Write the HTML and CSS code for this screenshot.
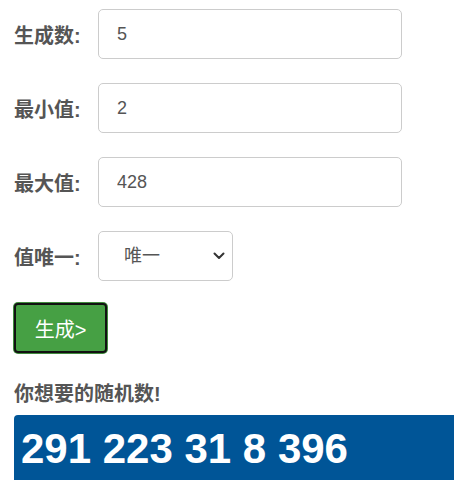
FILE: index.html
```html
<!DOCTYPE html>
<html lang="zh-CN">
  <head>
    <meta charset="UTF-8" />
    <meta name="viewport" content="width=device-width, initial-scale=1.0" />
    <title>随机数生成器</title>
    <link rel="stylesheet" href="styles.css">
  </head>
  <body>
    <form class="gen-form">
      <div class="row">
        <label for="count">生成数:</label>
        <input class="field" id="count" type="text" value="5" />
      </div>
      <div class="row">
        <label for="min">最小值:</label>
        <input class="field" id="min" type="text" value="2" />
      </div>
      <div class="row">
        <label for="max">最大值:</label>
        <input class="field" id="max" type="text" value="428" />
      </div>
      <div class="row">
        <label for="uniq">值唯一:</label>
        <span class="pick-wrap">
          <select class="field pick" id="uniq">
            <option>唯一</option>
            <option>不唯一</option>
          </select>
          <svg class="arrow" width="12" height="8" viewBox="0 0 12 8">
            <path d="M1.5 1.5 L6 6 L10.5 1.5" fill="none" stroke="#333" stroke-width="2" stroke-linecap="round" stroke-linejoin="round" />
          </svg>
        </span>
      </div>
      <button type="button" class="btn-go">生成&gt;</button>
    </form>
    <h4 class="result-title">你想要的随机数!</h4>
    <div class="result">291 223 31 8 396</div>
  </body>
</html>
```
FILE: styles.css
```css
* {
  padding: 0;
  margin: 0;
  box-sizing: border-box;
}
body {
  padding: 9px 0 0 14px;
  font-family: "Liberation Sans", "Noto Sans CJK SC", sans-serif;
  color: #555;
  background: #fff;
  overflow: hidden;
}
.gen-form {
  display: flex;
  flex-direction: column;
  gap: 24px;
}
.row {
  display: flex;
  align-items: center;
  gap: 12px;
}
.row label {
  width: 72px;
  font-size: 20px;
  font-weight: bold;
  color: #555;
  white-space: nowrap;
}
.field {
  width: 304px;
  height: 50px;
  padding: 0 18px;
  font-family: inherit;
  font-size: 18px;
  color: #555;
  border: 1px solid #ccc;
  border-radius: 5px;
  background: #fff;
  outline: none;
}
.pick-wrap {
  position: relative;
  display: flex;
}
.pick {
  width: 135px;
  padding-left: 25px;
  appearance: none;
  -webkit-appearance: none;
}
.arrow {
  position: absolute;
  right: 8px;
  top: 21px;
  pointer-events: none;
}
.btn-go {
  align-self: flex-start;
  width: 93px;
  height: 50px;
  margin-top: -2px;
  font-family: inherit;
  font-size: 20px;
  color: #fff;
  background: #46a044;
  border: 2px solid #111;
  border-radius: 4px;
  box-shadow: 0 0 0 1px #3f8a3c;
}
.result-title {
  margin-top: 25px;
  font-size: 20px;
  font-weight: bold;
  color: #555;
}
.result {
  margin-top: 8px;
  height: 70px;
  padding: 10px 0 0 7px;
  font-size: 42px;
  font-weight: bold;
  color: #fff;
  background: #005597;
  border-top-left-radius: 4px;
}
```
